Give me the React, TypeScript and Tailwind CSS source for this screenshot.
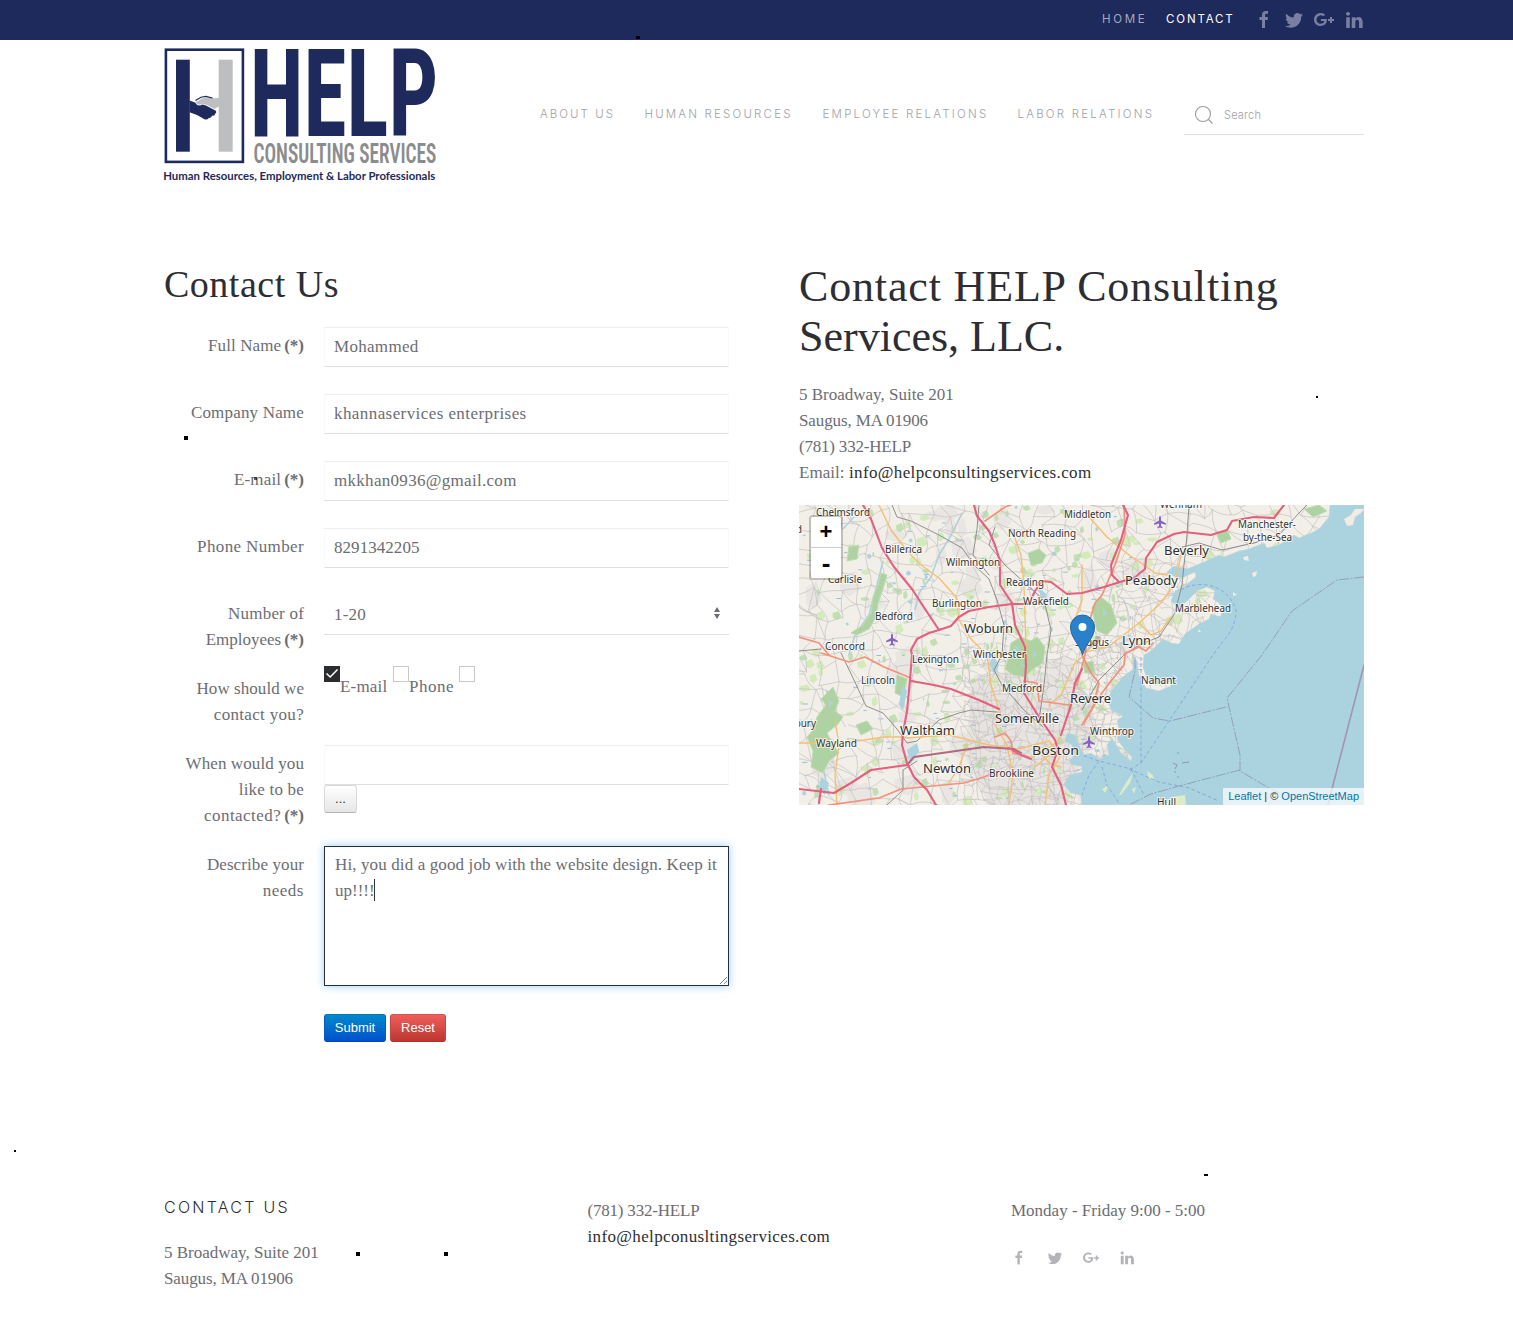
import type { ReactNode } from 'react';

const SERIF = "font-['Liberation_Serif',serif]";

/* ---------- icons ---------- */

type IconName = 'facebook' | 'twitter' | 'google' | 'linkedin';

const iconPaths: Record<IconName, string[]> = {
  facebook: [
    'M11,10h2.6l0.4-3H11V5.3c0-0.9,0.2-1.5,1.5-1.5H14V1.1c-0.3,0-1-0.1-2.1-0.1C9.6,1,8,2.4,8,5v2H5.5v3H8v8h3V10z',
  ],
  twitter: [
    'M19,4.74 C18.339,5.029 17.626,5.229 16.881,5.32 C17.644,4.86 18.227,4.139 18.503,3.28 C17.79,3.7 17.001,4.009 16.159,4.17 C15.485,3.45 14.526,3 13.464,3 C11.423,3 9.771,4.66 9.771,6.7 C9.771,6.99 9.804,7.269 9.868,7.539 C6.795,7.38 4.076,5.919 2.254,3.679 C1.936,4.219 1.754,4.86 1.754,5.539 C1.754,6.82 2.405,7.95 3.397,8.61 C2.79,8.589 2.22,8.429 1.723,8.149 L1.723,8.189 C1.723,9.978 2.997,11.478 4.686,11.82 C4.376,11.899 4.049,11.939 3.713,11.939 C3.475,11.939 3.245,11.919 3.018,11.88 C3.49,13.349 4.852,14.419 6.469,14.449 C5.205,15.429 3.612,16.019 1.882,16.019 C1.583,16.019 1.29,16.009 1,15.969 C2.635,17.019 4.576,17.629 6.662,17.629 C13.454,17.629 17.17,12 17.17,7.129 C17.17,6.969 17.166,6.809 17.157,6.649 C17.879,6.129 18.504,5.478 19,4.74',
  ],
  google: [
    'M12.9,9c0,2.7-0.6,5-3.2,6.3c-3.7,1.8-8.1,0.2-9.4-3.6C-1.1,7.6,1.9,3.3,6.1,3c1.7-0.1,3.2,0.3,4.6,1.3c0.1,0.1,0.3,0.2,0.4,0.4c-0.5,0.5-1.2,1-1.7,1.6c-1-0.8-2.1-1.1-3.5-0.9C5,5.6,4.2,6,3.6,6.7c-1.3,1.3-1.5,3.4-0.5,5c1,1.7,2.6,2.3,4.6,1.9c1.4-0.3,2.4-1.2,2.6-2.6H6.9V9H12.9z',
    'M20,9V11H18V13H16V11H14V9H16V7H18V9Z',
  ],
  linkedin: [
    'M5.77,17.89V7.17H2.21V17.89ZM3.99,5.71C5.23,5.71 6.01,4.89 6.01,3.86C5.99,2.8 5.24,2 4.02,2C2.8,2 2,2.8 2,3.85C2,4.88 2.77,5.7 3.97,5.7Z',
    'M7.75,17.89H11.31V11.9C11.31,11.58 11.33,11.26 11.43,11.03C11.69,10.39 12.27,9.73 13.26,9.73C14.55,9.73 15.06,10.71 15.06,12.15V17.89H18.62V11.74C18.62,8.45 16.86,6.92 14.52,6.92C12.6,6.92 11.75,7.99 11.28,8.73H11.3V7.17H7.75C7.79,8.17 7.75,17.89 7.75,17.89Z',
  ],
};

const socials: IconName[] = ['facebook', 'twitter', 'google', 'linkedin'];

function Social({ name, className }: { name: IconName; className: string }) {
  return (
    <svg viewBox="0 0 20 20" className={className} fill="currentColor">
      {iconPaths[name].map((d) => (
        <path key={d} d={d} />
      ))}
    </svg>
  );
}

/* ---------- logo ---------- */

function Logo() {
  return (
    <svg width="276" height="140" viewBox="0 0 276 140" className="block overflow-visible">
      <rect x="1.9" y="1.7" width="77" height="112.2" fill="none" stroke="#1e2a5b" strokeWidth="2.6" />
      <rect x="12" y="11.7" width="13.8" height="92" fill="#1e2a5b" />
      <rect x="54.7" y="11.7" width="14" height="92" fill="#bcbec0" />
      <path d="M55.500 49.5L50 50.5L46 49L38 50.5L31.500 54.5Q34 58 38.5 55.8L43 57L50.5 61L55.500 58Z" fill="#bcbec0" />
      <path
        d="M25.5 52.5L31 54.5Q33.5 59 38.5 56.5L42 57.500L51.8 62.8Q53 65 51 65.8Q51 68.4 48.2 67.6Q47.400 70.4 44.8 70Q42.8 72.5 40 71L33 67L25.5 64.2Z"
        fill="#1e2a5b"
      />
      <path d="M31.5 52.500L37 49.200L42 48.400L48.5 50" fill="none" stroke="#1e2a5b" strokeWidth="1.2" />
      <text
        x="85.800"
        y="87.6"
        textLength="188.500"
        lengthAdjust="spacingAndGlyphs"
        className="fill-[#1e2a5b] font-['Roboto',sans-serif] text-[122.8px] font-bold [font-stretch:75%]"
      >
        HELP
      </text>
      <text
        x="89.500"
        y="115"
        textLength="182.800"
        lengthAdjust="spacingAndGlyphs"
        className="fill-[#8a8c8e] font-['Roboto',sans-serif] text-[28px] font-semibold [font-stretch:75%]"
      >
        CONSULTING SERVICES
      </text>
      <text
        x="-0.8"
        y="131.6"
        textLength="272"
        lengthAdjust="spacingAndGlyphs"
        className="fill-[#1e2a5b] font-['Lato',sans-serif] text-[11px] font-bold"
      >
        Human Resources, Employment &amp; Labor Professionals
      </text>
    </svg>
  );
}

/* ---------- map ---------- */

const WATER =
  'M531 0L530 12L520 24L512 28L500 33L495 30L480 40L468 43L465 38L450 44L440 46L425 52L420 50L405 57L388 64L375 61L368 67L380 74L396 67L397 72L384 82L376 86L372 96L380 103L388 96L398 86L408 82L416 86L414 94L420 98L425 104L421 112L412 109L410 114L400 119L386 129L380 139L372 138L364 134L352 146L345 150L344 162L348 174L356 180L371 177L372 181L360 186L347 183L340 172L338 156L334 150L334 164L324 172L312 186L309 196L312 205L324 211L318 216L321 226L318 234L326 245L333 252L332 256L322 248L316 238L313 233L308 240L310 250L300 254L292 248L285 250L280 240L276 230L268 228L266 236L273 240L276 250L270 256L274 260L283 261L283 267L270 270L265 280L272 288L282 290L283 300L565 300L565 0Z';

/* Small deterministic generator so the street mesh is the same on every render. */
function makeRandom(seed: number) {
  let s = seed;
  return () => {
    s = (s * 1664525 + 1013904223) % 4294967296;
    return s / 4294967296;
  };
}

function mesh(x0: number, y0: number, x1: number, y1: number, step: number, seed: number, keep: number) {
  const rnd = makeRandom(seed);
  const cols = Math.ceil((x1 - x0) / step) + 1;
  const rows = Math.ceil((y1 - y0) / step) + 1;
  const pts: [number, number][][] = [];
  for (let r = 0; r < rows; r++) {
    pts.push([]);
    for (let c = 0; c < cols; c++) {
      pts[r].push([x0 + c * step + (rnd() - 0.5) * step * 0.95, y0 + r * step + (rnd() - 0.5) * step * 0.95]);
    }
  }
  let d = '';
  const link = (a: [number, number], b: [number, number]) => {
    if (rnd() > keep) return;
    const mx = (a[0] + b[0]) / 2 + (rnd() - 0.5) * step * 0.5;
    const my = (a[1] + b[1]) / 2 + (rnd() - 0.5) * step * 0.5;
    d += `M${a[0].toFixed(1)} ${a[1].toFixed(1)}Q${mx.toFixed(1)} ${my.toFixed(1)} ${b[0].toFixed(1)} ${b[1].toFixed(1)}`;
  };
  for (let r = 0; r < rows; r++) {
    for (let c = 0; c < cols; c++) {
      if (c + 1 < cols) link(pts[r][c], pts[r][c + 1]);
      if (r + 1 < rows) link(pts[r][c], pts[r + 1][c]);
      if (r + 1 < rows && c + 1 < cols && rnd() < 0.25) link(pts[r][c], pts[r + 1][c + 1]);
    }
  }
  return d;
}

const streets = mesh(-5, -5, 540, 305, 15, 11, 0.85);
const urbanStreets = mesh(165, 140, 320, 305, 7, 5, 0.75) + mesh(300, 60, 400, 150, 9, 8, 0.65);

function scatter(count: number, seed: number, maxX: number, size: number) {
  const rnd = makeRandom(seed);
  return Array.from({ length: count }, () => {
    const x = rnd() * maxX;
    const y = rnd() * 300;
    const w = size * (0.4 + rnd());
    const h = size * (0.4 + rnd());
    return `M${x.toFixed(1)} ${y.toFixed(1)}l${w.toFixed(1)} ${(-h * 0.4).toFixed(1)}l${(w * 0.5).toFixed(1)} ${h.toFixed(1)}l${(-w * 0.8).toFixed(1)} ${(h * 0.5).toFixed(1)}l${(-w * 0.6).toFixed(1)} ${(-h * 0.3).toFixed(1)}Z`;
  }).join('');
}

const meadows = scatter(170, 21, 480, 6);
const woods = scatter(110, 77, 330, 4.5);
const ponds = scatter(36, 99, 340, 2.6);
const suburbs = scatter(60, 42, 340, 15);
const marshes = (() => {
  const rnd = makeRandom(61);
  return Array.from({ length: 90 }, () => `M${(rnd() * 340).toFixed(1)} ${(rnd() * 300).toFixed(1)}h${(2 + rnd() * 4).toFixed(1)}`).join('');
})();

const forests = [
  'M82 68L79 80L74 92L72 108L64 120L52 128L58 130L70 124L77 112L79 98L84 84L88 70Z',
  'M34 182L22 194L27 200L18 212L15 224L8 232L14 246L12 262L24 268L30 256L40 248L32 236L28 228L38 220L44 212L36 206L40 196Z',
  'M206 164L210 152L212 138L222 132L232 136L238 132L246 142L244 158L234 164L226 172L214 170Z',
  'M229 48L240 44L247 50L243 58L232 60Z',
  'M293 102L302 92L312 100L318 118L308 130L298 126L295 114Z',
  'M418 30L428 24L432 34L422 38Z',
  'M50 42L60 40L58 54L48 56Z',
  'M505 4L520 0L528 6L514 12Z',
  'M98 170L108 174L104 192L96 188Z',
  'M57 220L68 216L74 224L62 230Z',
  'M284 158L294 156L296 168L286 168Z',
];

const motorways = [
  'M64 0L72 14L83 43L95 62L113 84L124 101L140 125',
  'M113 150L112 145L118 134L130 128L140 125L152 121L160 112L170 106L190 102L213 99L230 99L236 86L243 76L252 77L268 89L283 88L305 82L321 77L335 73L346 64L347 53L358 37L375 29L385 27L412 30L428 25L433 16L455 12L475 13L485 0',
  'M175 0L178 11L190 26L196 40L201 56L201 80L213 98L216 120L226 142L227 160L225 188L240 212L256 235L259 244L253 262L262 280L267 300',
  'M113 150L111 175L108 206L104 228L103 240L108 258L115 272L128 285L137 300',
  'M112 176L135 180L152 184L180 195L200 204',
  'M0 284L35 288L52 278L72 265L108 260',
  'M324 0L329 10L322 35L312 60L313 70L320 77',
  'M283 164L276 178L272 200L262 230',
  'M20 298L22 284',
];

const trunks = [
  'M22 148L50 157L66 152L85 162L112 173',
  'M30 300L80 293L102 284L165 278L185 272L200 266',
  'M0 132L20 138L30 150',
  'M186 16L206 2L212 0',
  'M325 0L326 30L316 60L303 90L296 98L290 118L286 150L278 180',
  'M283 150L292 168L300 178L294 202L283 220',
  'M225 176L238 178L240 196L270 200',
  'M326 150L325 160L312 176L300 192L285 218',
  'M196 232L206 228L212 236L214 248L230 252',
  'M325 149L340 142L347 146L354 138',
];

const primaries = [
  'M80 0L92 25L110 48L122 60L140 73L157 92L160 115L172 134L188 150',
  'M213 25L222 50L225 80L227 145',
  'M290 12L308 32L330 50L345 60L356 68L368 70',
  'M0 238L45 238L85 232L103 232L108 233L150 230L190 240L220 244L250 236',
  'M38 300L36 270L40 240L36 215',
  'M283 148L312 140L340 118L362 98L376 78L382 50',
  'M340 118L352 130L362 126L372 112',
  'M188 150L192 180L200 205L196 220L208 240L214 270L210 300',
  'M250 236L262 250L250 270L246 300',
  'M283 60L283 95L274 120L284 150',
  'M250 200L262 190L276 158L283 152',
  'M150 278L160 262L168 240',
  'M232 252L244 246L254 240L262 232M236 262L248 252L258 246M240 244L250 258L262 262',
];

const rails = [
  'M93 0L98 12L112 16L140 30L163 43L175 60L190 74L198 95L205 120L203 150L195 165L203 180L225 205L244 222',
  'M180 0L178 24L174 50L190 70',
  'M42 148L55 175L67 201L84 208L98 224L108 238L118 236L140 215L160 208L172 205L198 207',
  'M196 22L190 40L206 60L228 80L245 95L252 125L248 150L245 180L240 215',
  'M390 0L388 30L385 60L383 80L376 108L360 132L340 140L325 150L300 175L283 205',
  'M383 42L400 38L423 45L455 38L480 30L500 8L508 0',
  'M0 146L22 144',
  'M88 300L104 285L104 265L118 256',
];

const maritime = [
  'M565 72L538 75L493 106L463 150L428 193L441 250L441 266L470 283L490 292',
  'M427 202L371 216L354 213L330 192L336 166L336 152',
  'M441 265L380 281L352 289L330 300',
];

const ferries = [
  'M382 85Q392 78 408 80Q430 84 437 105Q437 122 425 135L414 150L370 216L342 258L332 264L300 256L283 250',
  'M342 258L342 150',
  'M330 264L360 277L390 283L420 296',
  'M300 256L290 270L283 290',
  'M332 264L345 290',
  'M303 262L308 280L320 298',
];

interface Label { t: string; x: number; y: number; w: number; big?: boolean }

/* x is the left edge and y the baseline of each name. */
const labels: Label[] = [
  { t: 'Chelmsford', x: 17, y: 11, w: 54 },
  { t: 'Middleton', x: 265, y: 12.5, w: 47 },
  { t: 'Wenham', x: 361, y: 3, w: 42 },
  { t: 'Manchester-', x: 439, y: 23, w: 58 },
  { t: 'by-the-Sea', x: 444, y: 35.5, w: 49 },
  { t: 'North Reading', x: 209, y: 32, w: 68 },
  { t: 'Billerica', x: 86, y: 48, w: 37 },
  { t: 'Beverly', x: 365, y: 50, w: 45, big: true },
  { t: 'Wilmington', x: 147, y: 60.5, w: 54 },
  { t: 'Carlisle', x: 29, y: 77.5, w: 34 },
  { t: 'Reading', x: 207, y: 81, w: 38 },
  { t: 'Peabody', x: 326, y: 80, w: 53, big: true },
  { t: 'Burlington', x: 133, y: 101.5, w: 50 },
  { t: 'Wakefield', x: 224, y: 100, w: 46 },
  { t: 'Marblehead', x: 376, y: 106.5, w: 56 },
  { t: 'Bedford', x: 76, y: 114.5, w: 38 },
  { t: 'Woburn', x: 165, y: 128, w: 49, big: true },
  { t: 'Concord', x: 26, y: 145, w: 40 },
  { t: 'Saugus', x: 276, y: 141, w: 34 },
  { t: 'Lynn', x: 323, y: 140, w: 29, big: true },
  { t: 'Winchester', x: 174, y: 153, w: 53 },
  { t: 'Lexington', x: 113, y: 158, w: 47 },
  { t: 'Lincoln', x: 62, y: 179, w: 34 },
  { t: 'Medford', x: 203, y: 187, w: 40 },
  { t: 'Nahant', x: 342, y: 178.5, w: 35 },
  { t: 'Revere', x: 271, y: 197.5, w: 41, big: true },
  { t: 'Somerville', x: 196, y: 218, w: 64, big: true },
  { t: 'Sudbury', x: -22, y: 222, w: 39 },
  { t: 'Waltham', x: 101, y: 229.5, w: 55, big: true },
  { t: 'Winthrop', x: 291, y: 229.5, w: 44 },
  { t: 'Wayland', x: 17, y: 241.5, w: 41 },
  { t: 'Boston', x: 233, y: 250, w: 47, big: true },
  { t: 'Newton', x: 124, y: 268, w: 48, big: true },
  { t: 'Brookline', x: 190, y: 272, w: 45 },
  { t: 'Hull', x: 358, y: 301, w: 19 },
  { t: 'd', x: -3, y: 28, w: 6 },
];

const planes: [number, number][] = [[93, 134.5], [361, 17], [290, 237]];

function MapDrawing() {
  return (
    <svg width="565" height="300" viewBox="0 0 565 300" className="block">
      <rect width="565" height="300" fill="#f2efe9" />
      <path d={suburbs} fill="#e8e5e2" />
      <path d="M175 170L240 165L290 190L300 230L280 262L268 300L190 300L165 250Z" fill="#e6e3e0" />
      <path d={meadows} fill="#d3ebb9" />
      <path d={woods} fill="#c0dfb2" />
      <path d={ponds} fill="#aad3df" />
      <path d={marshes} stroke="#6fa9d6" strokeWidth="0.7" fill="none" />
      <path d="M163 8L150 34L140 50L132 72L120 88L116 105M84 56L78 80L70 110L56 130L50 150M28 185L26 220L24 262L30 290M55 12L44 24M238 84L248 94L244 104" stroke="#aad3df" strokeWidth="1.6" fill="none" />
      <g fill="none" strokeLinejoin="round" strokeLinecap="round">
        <path d={streets} stroke="#c9c6c5" strokeWidth="0.8" />
        <path d={urbanStreets} stroke="#c4c0bf" strokeWidth="0.6" />
      </g>
      {forests.map((d) => (
        <path key={d} d={d} fill="#aed2a2" stroke="#bfdcb2" strokeWidth="1" />
      ))}
      <path d="M216 140L220 143L217 148ZM234 146L238 150L234 154ZM222 158L226 160L222 163ZM304 104L308 108L304 112ZM30 194L34 198L30 204ZM20 232L24 238L20 242Z" fill="#aad3df" />
      <path d="M103 180L108 186L104 206L100 200ZM108 245L118 238L120 246L112 258ZM240 82L248 90L242 96ZM22 272L30 278L26 290L20 284ZM194 150L200 160L196 170L190 160Z" fill="#aad3df" />
      <path d={WATER} fill="#aad3df" stroke="#c4d2cf" strokeWidth="0.5" />
      <g fill="#f0ece2">
        <path d="M545 14L552 10L556 4L565 4L562 8L556 12L554 20L548 21Z" />
        <path d="M453 68L458 66L457 71L454 72ZM444 52L449 51L450 56L445 55ZM434 87L438 90L434 91ZM400 124L402 127L399 127ZM379 133L381 136L378 136Z" />
        <path d="M320 290L328 276L334 268L331 278L322 290ZM303 284L310 280L306 288ZM333 284L337 282L335 289ZM348 266L354 270L355 276L349 272ZM364 300L372 292L386 290L387 300Z" fill="#dcebc8" />
      </g>
      <g fill="none" strokeLinejoin="round" strokeLinecap="round">
        {rails.map((d) => (
          <path key={d} d={d} stroke="#858585" strokeWidth="0.9" />
        ))}
        {primaries.map((d) => (
          <path key={d} d={d} stroke="#f7bf72" strokeWidth="1.4" />
        ))}
        {trunks.map((d) => (
          <path key={d} d={d} stroke="#f4917a" strokeWidth="1.7" />
        ))}
        <path d="M108 260L115 252L150 247L185 242L215 244L222 248" stroke="#b06a80" strokeWidth="2" />
        <path d="M210 243L222 250L232 254" stroke="#e4647f" strokeWidth="2" />
        {motorways.map((d) => (
          <path key={d} d={d} stroke="#e4607e" strokeWidth="2.1" />
        ))}
        {maritime.map((d) => (
          <path key={d} d={d} stroke="#9397b8" strokeWidth="0.9" strokeDasharray="10 1.5 2 1.5" strokeLinecap="butt" />
        ))}
        {ferries.map((d) => (
          <path key={d} d={d} stroke="#7ea4dd" strokeWidth="0.9" strokeDasharray="3.5 2.5" strokeLinecap="butt" />
        ))}
        <path d="M565 160L533 284L529 300" stroke="#a393b4" strokeWidth="1.6" />
      </g>
      <path d="M378 248h2M374 258l4 2l-2 4M383 258l7 -1M378 272h2M376 266v2" stroke="#8f94b0" strokeWidth="1" fill="none" />
      {planes.map(([x, y]) => (
        <path
          key={x}
          transform={`translate(${x} ${y})`}
          d="M0 -6.2Q1 -5.4 1 -3.6V-1.6L6 1.4V2.8L1 1.4V4L2.5 5.2V6.2L0 5.5L-2.5 6.2V5.2L-1 4V1.4L-6 2.8V1.4L-1 -1.6V-3.6Q-1 -5.4 0 -6.2Z"
          fill="#8461c4"
        />
      ))}
      {labels.map((l) => (
        <text
          key={l.t}
          x={l.x}
          y={l.y}
          textLength={l.w}
          lengthAdjust="spacingAndGlyphs"
          className={
            l.big
              ? "fill-[#2f2f2f] stroke-white/70 stroke-2 font-['Noto_Sans',sans-serif] text-[13px] [paint-order:stroke]"
              : "fill-[#333] stroke-white/70 stroke-2 font-['Noto_Sans',sans-serif] text-[10px] [paint-order:stroke]"
          }
        >
          {l.t}
        </text>
      ))}
      <path d="M284 149L298 131Q304 131 302 136Z" fill="#000" opacity="0.18" />
      <path
        d="M283.5 149.6C281 140 271.5 132.500 271.5 122A12 12 0 0 1 295.500 122C295.500 132.500 286 140 283.5 149.600Z"
        fill="#2a81cb"
        stroke="#22689f"
        strokeWidth="1"
      />
      <circle cx="283.500" cy="122" r="4" fill="#fff" />
    </svg>
  );
}

function MapPanel() {
  return (
    <div className="relative mt-[19px] h-[300px] w-[565px] overflow-hidden">
      <MapDrawing />
      <div className="absolute left-[10px] top-[10px] flex flex-col rounded border-2 border-black/20 bg-clip-padding font-['Liberation_Sans',sans-serif] font-bold text-black">
        <button className="flex h-[31px] w-[30px] items-center justify-center rounded-t-[2px] border-b border-[#ccc] bg-white text-[22px] leading-none">+</button>
        <button className="flex h-[30px] w-[30px] items-center justify-center rounded-b-[2px] bg-white text-[26px] leading-none">-</button>
      </div>
      <div className="absolute bottom-0 right-0 h-[17px] whitespace-nowrap bg-white/70 px-[5px] font-['Liberation_Sans',sans-serif] text-[11px] leading-[17px] text-[#333]">
        <a className="text-[#0078A8]">Leaflet</a> | © <a className="text-[#0078A8]">OpenStreetMap</a>
      </div>
    </div>
  );
}

/* ---------- form ---------- */

function Row({ height, label, children }: { height: string; label?: ReactNode; children: ReactNode }) {
  return (
    <div className={`flex gap-5 ${height}`}>
      <div className="w-[140px] shrink-0 whitespace-nowrap pt-[6px] text-right">{label}</div>
      <div className="w-[405px]">{children}</div>
    </div>
  );
}

function Field({ children, track = '' }: { children?: ReactNode; track?: string }) {
  return (
    <div
      className={`h-10 border border-b-[#dfdfe0] border-l-[#fafafa] border-r-[#fafafa] border-t-[#eeeeef] px-[9px] leading-[37px] ${track}`}
    >
      {children}
    </div>
  );
}

const Star = () => <b className="ml-[3px] tracking-normal">(*)</b>;

function Box({ checked = false }: { checked?: boolean }) {
  return checked ? (
    <span className="flex size-4 bg-[#2b2c2f]">
      <svg viewBox="0 0 16 16" className="size-4">
        <path d="M2.500 7.500L6.200 11L13.500 3.500" fill="none" stroke="#fff" strokeWidth="1.500" />
      </svg>
    </span>
  ) : (
    <span className="block size-4 border border-[#c9c9cb]" />
  );
}

function ContactForm() {
  return (
    <div className="w-[565px]">
      <h2 className="-mt-px mb-[18px] h-[50px] text-[38px] leading-[50px] tracking-[0.5px] text-[#2d2e33]">Contact Us</h2>
      <Row height="h-[67px]" label={<span className="tracking-[0.1px]">Full Name<Star /></span>}>
        <Field track="tracking-[0.3px]">Mohammed</Field>
      </Row>
      <Row height="h-[67px]" label={<span className="tracking-[0.18px]">Company Name</span>}>
        <Field track="tracking-[0.42px]">khannaservices enterprises</Field>
      </Row>
      <Row height="h-[67px]" label={<span className="tracking-[0.15px]">E-mail<Star /></span>}>
        <Field track="tracking-[0.3px]">mkkhan0936@gmail.com</Field>
      </Row>
      <Row height="h-[67px]" label={<span className="tracking-[0.37px]">Phone Number</span>}>
        <Field track="tracking-[0.05px]">8291342205</Field>
      </Row>
      <Row
        height="h-[75px]"
        label={<><div className="tracking-[0.2px]">Number of</div><div>Employees<Star /></div></>}
      >
        <div className="flex h-10 items-center justify-between border-b border-[#dfdfe0] pl-[10px] pr-[9px] tracking-[0.2px]">
          1-20
          <svg viewBox="0 0 6 14" className="-mt-[3px] h-[14px] w-[6px]" fill="#6c6d74">
            <path d="M0 6L3 1L6 6ZM0 8H6L3 13Z" />
          </svg>
        </div>
      </Row>
      <Row
        height="h-[75px]"
        label={<><div className="tracking-[0.06px]">How should we</div><div className="tracking-[0.32px]">contact you?</div></>}
      >
        <div className="-mt-1 flex items-start">
          <Box checked />
          <span className="mr-[5px] mt-2 w-[48px] tracking-[0.2px]">E-mail</span>
          <Box />
          <span className="mr-[5px] mt-2 w-[45px] tracking-[0.5px]">Phone</span>
          <Box />
        </div>
      </Row>
      <Row
        height="h-[101px]"
        label={
          <>
            <div className="tracking-[0.1px]">When would you</div>
            <div className="tracking-[0.2px]">like to be</div>
            <div className="tracking-[0.45px]">contacted?<Star /></div>
          </>
        }
      >
        <Field />
        <button className="flex h-7 w-[33px] items-center justify-center rounded-[3px] border border-[#d9d9d9] border-b-[#b3b3b3] bg-gradient-to-b from-white to-[#e6e6e6] font-['Liberation_Sans',sans-serif] text-[13px] text-[#333]">
          ...
        </button>
      </Row>
      <Row
        height="h-[168px]"
        label={<><div className="tracking-[0.1px]">Describe your</div><div className="tracking-[0.5px]">needs</div></>}
      >
        <div className="relative h-[140px] whitespace-nowrap border border-[#25303f] px-[10px] py-[5px] shadow-[0_0_8px_rgba(82,168,236,0.6)]">
          <div className="tracking-[0.12px]">Hi, you did a good job with the website design. Keep it</div>
          <div className="flex items-center">
            up!!!!<span className="-ml-px mb-0.5 h-[22px] w-px bg-[#333]" />
          </div>
          <svg viewBox="0 0 9 9" className="absolute bottom-0 right-0 size-[9px]" fill="none" stroke="#666" strokeWidth="0.800">
            <path d="M1 8L8 1M5 8L8 5" />
          </svg>
        </div>
      </Row>
      <div className="ml-40 flex gap-1 font-['Liberation_Sans',sans-serif] text-[13px] leading-none text-white">
        <button className="h-7 w-[62px] rounded-[3px] border border-t-[#0077b3] border-x-[#005fc0] border-b-[#0044b0] bg-gradient-to-b from-[#0088cc] to-[#0051cc] pb-px">Submit</button>
        <button className="h-7 w-[56px] rounded-[3px] border border-t-[#d9534f] border-x-[#cc4640] border-b-[#b0332e] bg-gradient-to-b from-[#ee5f5b] to-[#bd362f] pb-px">Reset</button>
      </div>
    </div>
  );
}

/* ---------- page ---------- */

const specks = [
  'left-[184px] top-[436px] size-1',
  'left-[636px] top-[36px] h-[3px] w-1',
  'left-[1316px] top-[396px] size-0.5',
  'left-[254px] top-[477px] size-[3px] opacity-60',
  'left-[14px] top-[1150px] size-0.5',
  'left-[1204px] top-[1174px] h-0.5 w-1',
  'left-[356px] top-[1252px] size-1',
  'left-[444px] top-[1252px] size-1',
];

export default function App() {
  return (
    <div className={`relative h-[1331px] w-[1513px] overflow-hidden bg-white text-[17px] leading-[26px] text-[#6c6d74] ${SERIF}`}>
      <div className="h-10 bg-[#1e2a5b]">
        <div className="ml-[164px] flex h-10 w-[1200px] items-center justify-end font-['Inter',sans-serif] text-[11.500px] leading-none">
          <a className="w-16 tracking-[2.700px] text-[#a5a9be]">HOME</a>
          <a className="w-[88px] tracking-[1.850px] text-white">CONTACT</a>
          <div className="flex gap-[10px] text-[#797fa0]">
            {socials.map((s) => (
              <Social key={s} name={s} className="size-5" />
            ))}
          </div>
        </div>
      </div>

      <header className="ml-[164px] flex h-[150px] w-[1200px] justify-between pt-2">
        <Logo />
        <nav className="flex h-[134px] items-center gap-[30px] whitespace-nowrap font-['Inter',sans-serif] text-[11.500px] font-light leading-none text-[#a0a1a7]">
          <a className="w-[74.500px] tracking-[2.050px]">ABOUT US</a>
          <a className="w-[148px] tracking-[2.180px]">HUMAN RESOURCES</a>
          <a className="w-[165px] tracking-[2.220px]">EMPLOYEE RELATIONS</a>
          <a className="w-[136.500px] tracking-[2.220px]">LABOR RELATIONS</a>
          <div className="flex h-10 w-[180px] items-center gap-[10px] border-b border-[#dfdfe0] pl-[10px] text-[11px] tracking-[0.200px]">
            <svg viewBox="0 0 20 20" className="size-5" fill="none" stroke="#9b9ca2" strokeWidth="1.100">
              <circle cx="9" cy="9" r="7.500" />
              <path d="M14 14L18.500 18.500" />
            </svg>
            <span className="pt-px">Search</span>
          </div>
        </nav>
      </header>

      <main className="ml-[164px] flex h-[1006px] w-[1200px] gap-[70px] pt-[70px]">
        <ContactForm />
        <div className="w-[565px]">
          <h1 className="mb-5 mt-[2px] text-[44px] leading-[50px] text-[#2d2e33]">
            <span className="tracking-[0.840px]">Contact HELP Consulting</span>
            <br />
            Services, LLC.
          </h1>
          <p>5 Broadway, Suite 201</p>
          <p className="tracking-[-0.120px]">Saugus, MA 01906</p>
          <p className="tracking-[-0.200px]">(781) 332-HELP</p>
          <p className="tracking-[0.360px]">
            <span className="tracking-[0.050px]">Email: </span>
            <a className="text-[#2d2e33]">info@helpconsultingservices.com</a>
          </p>
          <MapPanel />
        </div>
      </main>

      <footer className="ml-[164px] grid w-[1200px] grid-cols-[423.500px_423.500px_1fr]">
        <div>
          <h3 className="-mt-px mb-5 font-['Inter',sans-serif] text-base font-light leading-[25px] tracking-[2.250px] text-[#2d2e33]">CONTACT US</h3>
          <p>5 Broadway, Suite 201</p>
          <p className="tracking-[-0.120px]">Saugus, MA 01906</p>
        </div>
        <div className="pt-0.5">
          <p className="tracking-[-0.200px]">(781) 332-HELP</p>
          <p className="tracking-[0.360px] text-[#2d2e33]">info@helpconusltingservices.com</p>
        </div>
        <div className="pt-0.5">
          <p>Monday - Friday 9:00 - 5:00</p>
          <div className="mt-[26px] flex gap-5 text-[#b3b3b8]">
            {socials.map((s) => (
              <Social key={s} name={s} className="size-4" />
            ))}
          </div>
        </div>
      </footer>

      {specks.map((s) => (
        <span key={s} className={`absolute bg-black ${s}`} />
      ))}
    </div>
  );
}
